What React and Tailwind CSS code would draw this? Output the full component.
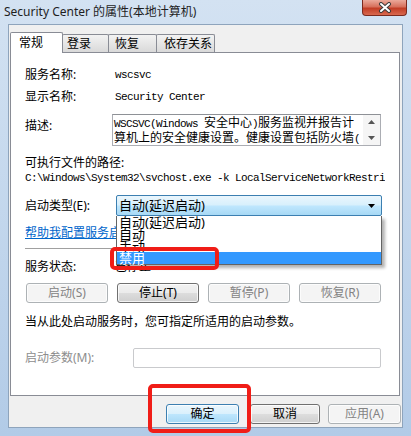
import React from "react";

const mono = "font-['Liberation_Mono','Noto_Sans_CJK_SC',monospace] text-[11px] tracking-[-0.6px]";

function Btn({ children, disabled, primary, className = "" }) {
  const look = disabled
    ? "border-[#adb2b5] bg-[#f4f4f4] text-[#838383]"
    : primary
    ? "border-[#3c7fb1] bg-[linear-gradient(#eaf6fd_0%,#d9f0fc_50%,#bee6fd_50%,#a7d9f5_100%)] text-black"
    : "border-[#707070] bg-[linear-gradient(#f2f2f2_0%,#ebebeb_50%,#dddddd_50%,#cfcfcf_100%)] text-black";
  return (
    <div
      className={`h-[20px] flex items-center justify-center rounded-[3px] border text-[12px] leading-none shadow-[inset_0_0_0_1px_rgba(255,255,255,0.75)] ${look} ${className}`}
    >
      {children}
    </div>
  );
}

function Tab({ children, selected, className = "" }) {
  return (
    <div
      className={
        selected
          ? `relative z-10 h-[21px] bg-white border border-b-0 border-[#898c95] rounded-t-[2px] flex items-center text-[12px] ${className}`
          : `h-[18px] mb-[1px] -ml-[1px] bg-[linear-gradient(#f3f3f3,#e6e6e6_50%,#d9d9d9)] border border-b-0 border-[#898c95] rounded-t-[2px] flex items-center text-[12px] ${className}`
      }
    >
      {children}
    </div>
  );
}

export default function App() {
  return (
    <div className="relative w-[411px] h-[436px] overflow-hidden bg-linear-to-b from-[#d3e2f2] to-[#b2cbe7] font-['Noto_Sans','Noto_Sans_CJK_SC',sans-serif] text-black">
      {/* Title bar */}
      <div className="h-[24px] flex items-start justify-between">
        <div className="pl-[4px] h-[24px] flex items-center text-[12px] text-[#1e1e1e]">
          Security Center 的属性(本地计算机)
        </div>
        <div className="mr-[4px] w-[45px] h-[16px] rounded-b-[4px] border border-t-0 border-[#7b2a1e] bg-[linear-gradient(#eba99a,#d7705c_45%,#c23d25_55%,#d8694f)] flex items-center justify-center">
          <svg width="14" height="11" viewBox="0 0 14 11">
            <path d="M3 2 L11 9 M11 2 L3 9" stroke="#3b3b3b" strokeWidth="4" strokeLinecap="round" />
            <path d="M3 2 L11 9 M11 2 L3 9" stroke="#ffffff" strokeWidth="2" strokeLinecap="round" />
          </svg>
        </div>
      </div>

      {/* Client */}
      <div className="mx-[8px] h-[404px] bg-[#f0f0f0] border border-[#8ea4bc] flex flex-col">
        {/* Tabs */}
        <div className="mt-[7px] pl-[1px] h-[21px] -mb-[1px] flex items-end">
          <Tab selected className="w-[53px] pl-[8px]">常规</Tab>
          <Tab className="w-[47px] pl-[4px]">登录</Tab>
          <Tab className="w-[49px] pl-[6px]">恢复</Tab>
          <Tab className="w-[59px] pl-[7px]">依存关系</Tab>
        </div>

        {/* Panel */}
        <div className="ml-[1px] w-[390px] h-[344px] bg-white border border-[#898c95] flex flex-col pl-[14px] text-[12px]">
          <div className="mt-[12px] h-[20px] flex items-center">
            <div className="w-[90px]">服务名称:</div>
            <div className={mono}>wscsvc</div>
          </div>
          <div className="mt-[2px] h-[20px] flex items-center">
            <div className="w-[90px]">显示名称:</div>
            <div className={mono}>Security Center</div>
          </div>
          <div className="mt-[7px] flex items-start">
            <div className="w-[87px] pt-[4px] leading-[16px]">描述:</div>
            <div className="w-[269px] h-[32px] border border-[#abadb3] border-t-[#8e9196] flex">
              <div className="flex-1 pl-[1px] pt-[1px] leading-[13px] overflow-hidden whitespace-nowrap">
                <div>
                  <span className={mono}>WSCSVC(Windows </span>安全中心<span className={mono}>)</span>服务监视并报告计
                </div>
                <div>
                  算机上的安全健康设置。健康设置包括防火墙<span className={mono}>(</span>
                </div>
              </div>
              <div className="w-[17px] bg-[#f5f5f5] flex flex-col items-center justify-between py-[5px]">
                <svg width="7" height="4" viewBox="0 0 7 4"><path d="M0 4 L3.5 0 L7 4 Z" fill="#555" /></svg>
                <svg width="7" height="4" viewBox="0 0 7 4"><path d="M0 0 L7 0 L3.5 4 Z" fill="#555" /></svg>
              </div>
            </div>
          </div>
          <div className="mt-[9px] h-[16px] flex items-center">可执行文件的路径:</div>
          <div className={`h-[14px] w-[360px] flex items-center overflow-hidden whitespace-nowrap ${mono}`}>
            C:\Windows\System32\svchost.exe -k LocalServiceNetworkRestri
          </div>
          <div className="mt-[10px] h-[21px] flex items-center">
            <div className="w-[91px]">启动类型(E):</div>
            <div className="relative w-[266px] h-[21px]">
              <div className="h-full border border-[#3c7fb1] rounded-[2px] bg-[linear-gradient(#eaf6fd_0%,#d9f0fc_45%,#bee6fd_55%,#a7d9f5_100%)] flex items-center justify-between pl-[2px] pr-[6px] text-[13px]">
                <span>自动(延迟启动)</span>
                <svg width="7" height="4" viewBox="0 0 7 4"><path d="M0 0 L7 0 L3.5 4 Z" fill="#000" /></svg>
              </div>
              <div className="absolute top-full left-0 w-full z-20 bg-white border border-t-0 border-[#646464] shadow-[3px_3px_3px_rgba(0,0,0,0.3)] text-[13px] leading-[12px]">
                <div className="h-[12px] pl-[2px] whitespace-nowrap">自动(延迟启动)</div>
                <div className="h-[12px] pl-[2px] whitespace-nowrap">自动</div>
                <div className="h-[12px] pl-[2px] whitespace-nowrap">手动</div>
                <div className="relative h-[12px] pl-[2px] bg-[#3399ff] text-white whitespace-nowrap">禁用</div>
              </div>
            </div>
          </div>
          <div className="mt-[9px] h-[16px] flex items-center">
            <span className="text-[#0066cc] underline">帮助我配置服务启动选项。</span>
          </div>
          <div className="mt-[7px] w-[357px] border-t border-[#a0a0a0]" />
          <div className="mt-[10px] h-[16px] flex items-center">
            <div className="w-[90px]">服务状态:</div>
            <div>已停止</div>
          </div>
          <div className="mt-[8px] ml-[1px] w-[355px] grid grid-cols-4 gap-[9px]">
            <Btn disabled>启动(S)</Btn>
            <Btn>停止(T)</Btn>
            <Btn disabled>暂停(P)</Btn>
            <Btn disabled>恢复(R)</Btn>
          </div>
          <div className="mt-[11px] h-[16px] flex items-center">当从此处启动服务时，您可指定所适用的启动参数。</div>
          <div className="mt-[18px] h-[20px] flex items-center">
            <div className="w-[108px] text-[#8d8d8d]">启动参数(M):</div>
            <div className="w-[248px] h-[20px] border border-[#c9cacd] rounded-[2px] bg-white" />
          </div>
        </div>

        {/* Dialog buttons */}
        <div className="mt-[8px] pr-[1px] flex justify-end">
          <Btn primary className="w-[73px]">确定</Btn>
          <Btn className="ml-[11px] w-[70px]">取消</Btn>
          <Btn disabled className="ml-[8px] w-[73px]">应用(A)</Btn>
        </div>
      </div>

      {/* Red annotation boxes */}
      <div className="absolute left-[110px] top-[247px] w-[109px] h-[23px] border-[4px] border-[#f01d17] rounded-[5px] z-30" />
      <div className="absolute left-[148px] top-[384px] w-[103px] h-[49px] border-[4px] border-[#f01d17] rounded-[5px] z-30" />
    </div>
  );
}
